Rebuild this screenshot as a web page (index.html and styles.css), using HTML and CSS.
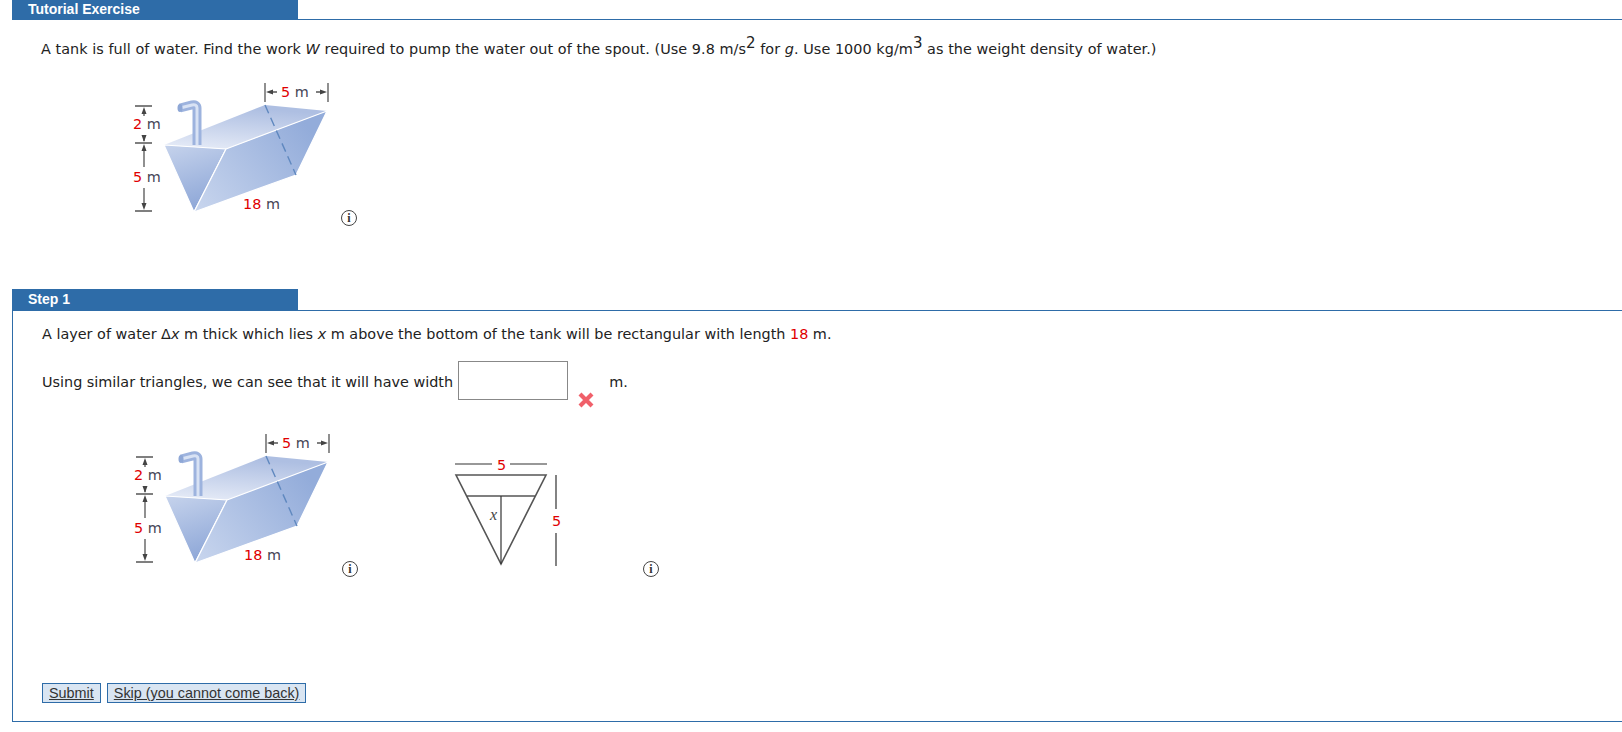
FILE: index.html
```html
<!DOCTYPE html>
<html lang="en">
<head>
  <meta charset="UTF-8" />
  <title>Tutorial Exercise</title>
  <link rel="stylesheet" href="styles.css">
</head>
<body>
  <svg class="defs" width="0" height="0">
    <defs>
      <linearGradient id="gTop" x1="0" y1="1" x2="0.3" y2="0">
        <stop offset="0" stop-color="#e8edf8" />
        <stop offset="1" stop-color="#aebfe2" />
      </linearGradient>
      <linearGradient id="gFront" x1="0" y1="0" x2="0.3" y2="1">
        <stop offset="0" stop-color="#c6d3ec" />
        <stop offset="1" stop-color="#8fa8d8" />
      </linearGradient>
      <linearGradient id="gSide" x1="0" y1="1" x2="1" y2="0.4">
        <stop offset="0" stop-color="#c9d6ee" />
        <stop offset="1" stop-color="#93acda" />
      </linearGradient>
    </defs>
  </svg>

  <div class="tabbar"><div class="tab tab-first">Tutorial Exercise</div></div>
  <div class="intro">
    <p class="question">A tank is full of water. Find the work <i>W</i> required to pump the water out of the spout. (Use 9.8 m/s<sup>2</sup> for <i>g</i>. Use 1000 kg/m<sup>3</sup> as the weight density of water.)</p>
    <div class="figures figures-first">
      <svg class="tank" width="210" height="145" viewBox="130 80 210 145">
        <polygon points="265,105 327,111 226,149 164,145" fill="url(#gTop)" />
        <polygon points="164,145 226,149 194,212" fill="url(#gFront)" stroke="#fff" />
        <polygon points="226,149 327,111 296,175 194,212" fill="url(#gSide)" stroke="#fff" />
        <path class="dash" d="M265 105L296 175" />
        <path class="pipe" d="M197 145V108Q197 104 192 105L180 108" />
        <path class="pipe-light" d="M197 145V108Q197 104 192 105L182 107.500" />
        <ellipse cx="180" cy="108" rx="2.500" ry="4" fill="#8ea7d6" />
        <g class="dim">
          <path d="M135 106H152M135 143H152M135 211H152M144 112V116M144 136V141M144 149V167M144 188V205" />
          <path d="M265 83V102M328 83V102M272 92H277M316 92H322" />
        </g>
        <path class="head" d="M144 107l-2.500 7h5zM144 142l-2.500-7h5zM144 144l-2.500 7h5zM144 210l-2.500-7h5zM266 92l7-2.500v5zM327 92l-7-2.500v5z" />
        <text class="lab" x="133" y="129"><tspan class="red">2</tspan> m</text>
        <text class="lab" x="133" y="182"><tspan class="red">5</tspan> m</text>
        <text class="lab" x="281" y="97"><tspan class="red">5</tspan> m</text>
        <text class="lab" x="243" y="209"><tspan class="red">18</tspan> m</text>
      </svg>
      <svg class="info" width="18" height="18" viewBox="0 0 18 18"><circle cx="9" cy="9" r="7.500" /><text x="9" y="13">i</text></svg>
    </div>
  </div>

  <div class="tabbar tabbar-step"><div class="tab">Step 1</div></div>
  <div class="panel">
    <p class="line-one">A layer of water Δ<i>x</i> m thick which lies <i>x</i> m above the bottom of the tank will be rectangular with length <span class="red">18</span> m.</p>
    <div class="answer">
      <span class="answer-text">Using similar triangles, we can see that it will have width</span>
      <input class="box" type="text" />
      <svg class="wrong" width="16" height="16" viewBox="0 0 16 16"><path d="M2 2L14 14M14 2L2 14" /></svg>
      <span class="answer-text">m.</span>
    </div>
    <div class="figures figures-step">
      <svg class="tank" width="210" height="145" viewBox="130 80 210 145">
        <polygon points="265,105 327,111 226,149 164,145" fill="url(#gTop)" />
        <polygon points="164,145 226,149 194,212" fill="url(#gFront)" stroke="#fff" />
        <polygon points="226,149 327,111 296,175 194,212" fill="url(#gSide)" stroke="#fff" />
        <path class="dash" d="M265 105L296 175" />
        <path class="pipe" d="M197 145V108Q197 104 192 105L180 108" />
        <path class="pipe-light" d="M197 145V108Q197 104 192 105L182 107.500" />
        <ellipse cx="180" cy="108" rx="2.500" ry="4" fill="#8ea7d6" />
        <g class="dim">
          <path d="M135 106H152M135 143H152M135 211H152M144 112V116M144 136V141M144 149V167M144 188V205" />
          <path d="M265 83V102M328 83V102M272 92H277M316 92H322" />
        </g>
        <path class="head" d="M144 107l-2.500 7h5zM144 142l-2.500-7h5zM144 144l-2.500 7h5zM144 210l-2.500-7h5zM266 92l7-2.500v5zM327 92l-7-2.500v5z" />
        <text class="lab" x="133" y="129"><tspan class="red">2</tspan> m</text>
        <text class="lab" x="133" y="182"><tspan class="red">5</tspan> m</text>
        <text class="lab" x="281" y="97"><tspan class="red">5</tspan> m</text>
        <text class="lab" x="243" y="209"><tspan class="red">18</tspan> m</text>
      </svg>
      <svg class="info" width="18" height="18" viewBox="0 0 18 18"><circle cx="9" cy="9" r="7.500" /><text x="9" y="13">i</text></svg>
      <svg class="triangle" width="120" height="120" viewBox="450 455 120 120">
        <path class="tri-thick" d="M456 475H546L501 564ZM467 496H536" />
        <path class="tri-thin" d="M501 496V564" />
        <path class="tri-thin" d="M455 464H492M510 464H547M556 475V509M556 533V566" />
        <text class="lab-x" x="490" y="520">x</text>
        <text class="lab red" x="497" y="470">5</text>
        <text class="lab red" x="552" y="526">5</text>
      </svg>
      <svg class="info info-last" width="18" height="18" viewBox="0 0 18 18"><circle cx="9" cy="9" r="7.500" /><text x="9" y="13">i</text></svg>
    </div>
    <div class="buttons">
      <button class="btn" type="button">Submit</button>
      <button class="btn" type="button">Skip (you cannot come back)</button>
    </div>
  </div>
</body>
</html>
```

FILE: styles.css
```css
body {
  margin: 0;
  background-color: #fff;
  color: #222;
  font-family: "DejaVu Sans", Verdana, sans-serif;
  font-size: 14.4px;
}

.defs {
  display: block;
  height: 0;
}

.tabbar {
  margin-left: 12px;
  border-bottom: 1px solid #2e6ca8;
}

.tabbar-step {
  margin-top: 64px;
}

.tab {
  width: 270px;
  height: 21px;
  padding-left: 16px;
  background-color: #2e6ca8;
  color: #fff;
  font-family: "Liberation Sans", Arial, sans-serif;
  font-size: 14px;
  font-weight: bold;
  line-height: 21px;
}

.tab-first {
  height: 19px;
  line-height: 18px;
}

.intro {
  padding-left: 41px;
}

.question {
  margin: 0;
  padding-top: 18px;
  line-height: 22px;
  letter-spacing: 0.05px;
}

sup {
  font-size: 15px;
  line-height: 0;
}

.figures {
  display: flex;
  align-items: flex-end;
}

.figures-first {
  margin-top: 20px;
  margin-left: 89px;
}

.tank {
  display: block;
  flex: none;
}

.tank polygon {
  stroke-width: 1.2;
}

.dash {
  fill: none;
  stroke: #5f88bf;
  stroke-width: 1.4;
  stroke-dasharray: 9 5;
}

.pipe {
  fill: none;
  stroke: #9db3de;
  stroke-width: 9;
}

.pipe-light {
  fill: none;
  stroke: #d8e2f4;
  stroke-width: 3;
}

.dim path {
  fill: none;
  stroke: #555;
  stroke-width: 1.3;
}

.head {
  fill: #444;
}

.lab {
  fill: #445;
  font-family: "DejaVu Sans", Verdana, sans-serif;
  font-size: 14.4px;
}

.red {
  color: #e00000;
  fill: #e00000;
}

.lab-x {
  fill: #444;
  font-family: "Liberation Serif", serif;
  font-size: 16px;
  font-style: italic;
}

.info {
  flex: none;
  margin-bottom: -2px;
}

.info circle {
  fill: #fff;
  stroke: #444;
  stroke-width: 1;
}

.info text {
  fill: #333;
  font-family: "Liberation Serif", serif;
  font-size: 12px;
  font-weight: bold;
  text-anchor: middle;
}

.panel {
  margin-left: 12px;
  height: 410px;
  padding-left: 29px;
  border-left: 1px solid #2e6ca8;
  border-bottom: 1px solid #2e6ca8;
}

.line-one {
  margin: 0;
  padding-top: 12px;
  line-height: 22px;
}

.answer {
  display: flex;
  align-items: center;
  gap: 5px;
  margin-top: 16px;
}

.answer-text {
  margin-top: 3px;
}

.box {
  width: 108px;
  height: 37px;
  padding: 0;
  margin: 0;
  border: 1px solid #888;
  background-color: #fff;
}

.wrong {
  align-self: flex-end;
  margin: 0 10px -8px 5px;
}

.wrong path {
  fill: none;
  stroke: #f0606a;
  stroke-width: 4.2;
}

.figures-step {
  margin-top: 31px;
  margin-left: 89px;
}

.triangle {
  flex: none;
  margin-left: 91px;
  margin-bottom: 1px;
}

.tri-thick {
  fill: none;
  stroke: #555;
  stroke-width: 1.6;
}

.tri-thin {
  fill: none;
  stroke: #333;
  stroke-width: 1.2;
}

.info-last {
  margin-left: 72px;
}

.buttons {
  display: flex;
  gap: 6px;
  margin-top: 107px;
}

.btn {
  height: 20px;
  padding: 0 6px;
  border: 1px solid #2e6ca8;
  background-color: #d9e5f2;
  color: #333;
  font-family: "Liberation Sans", Arial, sans-serif;
  font-size: 14.4px;
  line-height: 18px;
  text-decoration: underline;
}
```
